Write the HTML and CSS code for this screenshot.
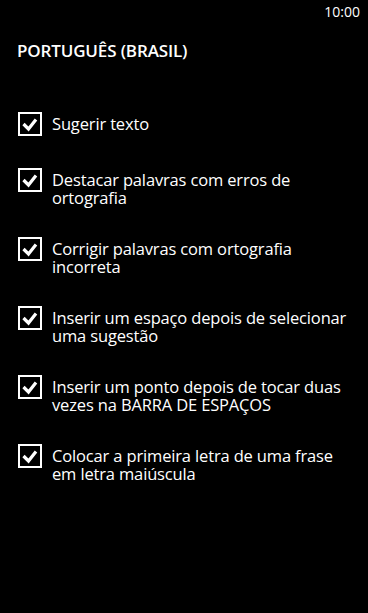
FILE: index.html
```html
<!DOCTYPE html>
<html lang="pt-BR">
<head>
<meta charset="utf-8">
<title>Português (Brasil)</title>
<link rel="stylesheet" href="styles.css">
</head>
<body>
<div class="screen">
  <div class="status"><span class="clock">10:00</span></div>
  <h1 class="title">PORTUGUÊS (BRASIL)</h1>
  <ul class="options">
    <li class="option">
      <span class="box"><svg viewBox="0 0 20 20" width="20" height="20"><polyline points="3.5,10 8.5,15 16,5.5" /></svg></span>
      <span class="label">Sugerir texto</span>
    </li>
    <li class="option">
      <span class="box"><svg viewBox="0 0 20 20" width="20" height="20"><polyline points="3.5,10 8.5,15 16,5.5" /></svg></span>
      <span class="label">Destacar palavras com erros de ortografia</span>
    </li>
    <li class="option">
      <span class="box"><svg viewBox="0 0 20 20" width="20" height="20"><polyline points="3.5,10 8.5,15 16,5.5" /></svg></span>
      <span class="label">Corrigir palavras com ortografia incorreta</span>
    </li>
    <li class="option">
      <span class="box"><svg viewBox="0 0 20 20" width="20" height="20"><polyline points="3.5,10 8.5,15 16,5.5" /></svg></span>
      <span class="label">Inserir um espaço depois de selecionar uma sugestão</span>
    </li>
    <li class="option">
      <span class="box"><svg viewBox="0 0 20 20" width="20" height="20"><polyline points="3.5,10 8.5,15 16,5.5" /></svg></span>
      <span class="label">Inserir um ponto depois de tocar duas vezes na BARRA DE ESPAÇOS</span>
    </li>
    <li class="option">
      <span class="box"><svg viewBox="0 0 20 20" width="20" height="20"><polyline points="3.5,10 8.5,15 16,5.5" /></svg></span>
      <span class="label">Colocar a primeira letra de uma frase em letra maiúscula</span>
    </li>
  </ul>
</div>
</body>
</html>
```

FILE: styles.css
```css
html, body {
  margin: 0;
  padding: 0;
  background: #000;
}
body {
  color: #fff;
  font-family: "Open Sans", "Noto Sans", sans-serif;
}
.screen {
  width: 368px;
  height: 613px;
  background: #000;
  overflow: hidden;
}
.status {
  display: flex;
  justify-content: flex-end;
  padding: 3px 8px 0 0;
  height: 22px;
}
.clock {
  font-size: 14px;
  line-height: 18px;
  color: #fff;
}
.title {
  margin: 14px 0 0 17px;
  font-size: 17px;
  font-weight: 600;
  line-height: 24px;
  letter-spacing: -0.15px;
}
.options {
  list-style: none;
  margin: 49px 0 0 0;
  padding: 0 0 0 18px;
  display: flex;
  flex-direction: column;
  gap: 30px;
}
.option {
  display: flex;
  align-items: flex-start;
  gap: 10px;
  min-height: 26px;
}
.box {
  flex: none;
  box-sizing: border-box;
  width: 24px;
  height: 24px;
  border: 2px solid #fff;
  display: flex;
  align-items: center;
  justify-content: center;
}
.box svg {
  display: block;
}
.box polyline {
  fill: none;
  stroke: #fff;
  stroke-width: 3.2;
  stroke-linecap: butt;
  stroke-linejoin: miter;
}
.label {
  font-size: 16.5px;
  line-height: 18px;
  letter-spacing: -0.15px;
  padding-top: 3px;
  width: 300px;
}
```
